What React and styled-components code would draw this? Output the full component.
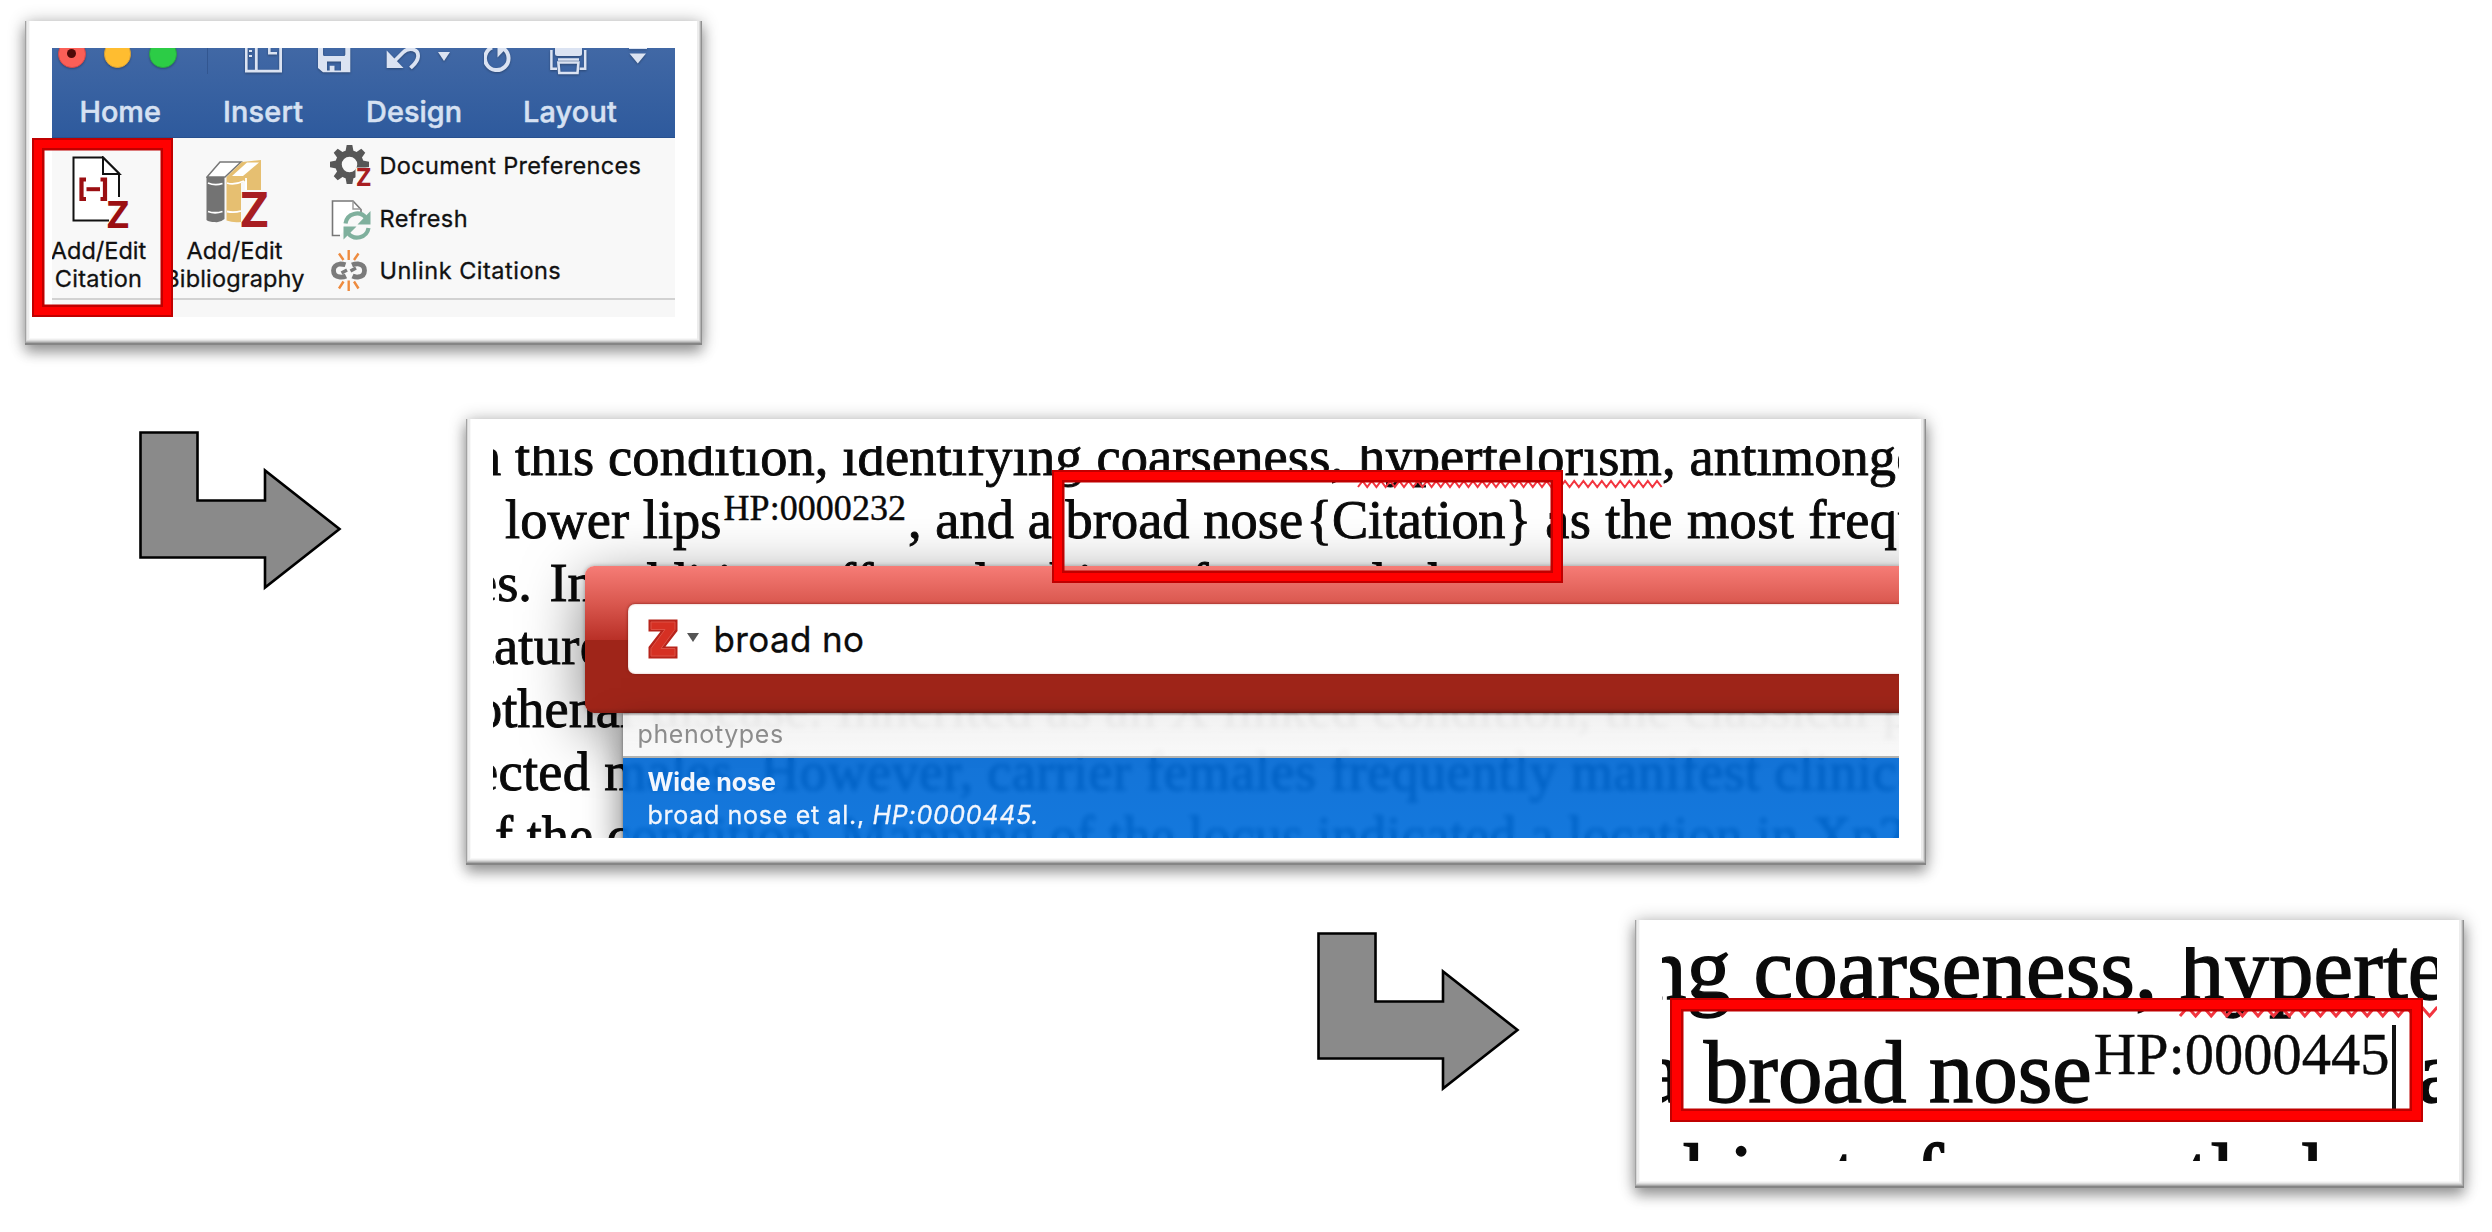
import React from 'react';
import styled, { createGlobalStyle } from 'styled-components';

const SANS = "Inter, 'Liberation Sans', sans-serif";
const SERIF = "'Liberation Serif', 'Times New Roman', serif";

const Global = createGlobalStyle`
  * { box-sizing: border-box; }
  html, body { margin: 0; padding: 0; background: #fff; }
  body { width: 2492px; height: 1232px; overflow: hidden; }
`;

/* ---------- figure layout ---------- */

const Figure = styled.main`
  width: 2492px;
  height: 1232px;
  background: #fff;
  display: flex;
  flex-direction: column;
  align-items: flex-start;
  overflow: hidden;
`;

const Step = styled.section`
  display: flex;
  align-items: flex-start;
  gap: ${(p) => p.$gap || 0}px;
  padding: ${(p) => p.$top}px 0 0 ${(p) => p.$left}px;
`;

const Card = styled.div`
  position: relative;
  flex: none;
  width: ${(p) => p.$w}px;
  height: ${(p) => p.$h}px;
  padding: 27px;
  background: #fff;
  box-shadow:
    inset 0 -2px 0 #858585,
    inset 1px 0 0 #a2a2a2,
    inset -1px 0 0 #909090,
    inset 0 -3px 0 #a6a6a6,
    inset -2px 0 0 #b2b2b2,
    inset 0 -4px 0 #c4c4c4,
    inset 2px 0 0 #d8d8d8,
    inset -3px 0 0 #d6d6d6,
    inset 0 -5px 0 #dcdcdc,
    inset 4px 0 0 #ececec,
    inset -5px 0 0 #ececec,
    inset 0 -6px 0 #eeeeee,
    inset 5px -7px 0 #f8f8f8,
    0 8px 12px rgba(0, 0, 0, 0.28),
    0 1px 16px rgba(0, 0, 0, 0.3);
`;

const Shot = styled.div`
  position: relative;
  width: 100%;
  height: ${(p) => p.$h}px;
  overflow: hidden;
  background: ${(p) => p.$bg || '#fff'};
`;

const Highlight = styled.div`
  position: absolute;
  z-index: 3;
  left: ${(p) => p.$x}px;
  top: ${(p) => p.$y}px;
  width: ${(p) => p.$w}px;
  height: ${(p) => p.$h}px;
  border: 2.5px solid #c00000;
  box-shadow: inset 0 0 0 ${(p) => p.$t || 8}px #ff0000, inset 0 0 0 ${(p) => (p.$t || 8) + 2.5}px #c00000;
`;

const ArrowSvg = styled.svg`
  display: block;
  flex: none;
  margin-top: ${(p) => p.$top}px;
`;

const Arrow = ({ top }) => (
  <ArrowSvg $top={top} width="205" height="162" viewBox="138 430 205 162">
    <path
      d="M140.5 432.5H197.5V500.5H265V470.5L339.5 529L265 587.5V557.5H140.5Z"
      fill="#8a8a8a"
      stroke="#000"
      strokeWidth="2.6"
    />
  </ArrowSvg>
);

/* ---------- Word ribbon ---------- */

const TitleArea = styled.div`
  height: 90px;
  background: linear-gradient(#4168a5, #2e5a9d);
  border-bottom: 1px solid #27508f;
`;

const QuickBar = styled.div`
  display: flex;
  align-items: flex-start;
  height: 34px;
  padding-left: 6px;
`;

const Lights = styled.div`
  display: flex;
  gap: 18px;
  margin-top: -8px;
`;

const Light = styled.span`
  width: 27.5px;
  height: 27.5px;
  border-radius: 50%;
  background: ${(p) => p.$c};
  border: 1px solid ${(p) => p.$edge};
  display: flex;
  align-items: center;
  justify-content: center;
  box-shadow: 0 1px 2px rgba(0, 0, 0, 0.25);
  &::after {
    content: '';
    width: 9px;
    height: 9px;
    border-radius: 50%;
    background: ${(p) => p.$dot || 'transparent'};
  }
`;

const Divider = styled.span`
  width: 1px;
  height: 26px;
  margin-left: 30px;
  background: #325690;
`;

const BarIcon = styled.svg`
  display: block;
  flex: none;
  height: 30px;
  margin-left: ${(p) => p.$gap}px;
  filter: drop-shadow(0 1px 1px rgba(0, 0, 0, 0.3));
`;

const Tabs = styled.nav`
  display: flex;
  padding-left: 27.5px;
`;

const Tab = styled.span`
  width: ${(p) => p.$w}px;
  font: 500 28.8px/44px ${SANS};
  letter-spacing: ${(p) => p.$ls || 0}px;
  color: #d6e1f2;
  -webkit-text-stroke: 0.5px #d6e1f2;
  margin-top: 8px;
`;

const RibbonBody = styled.div`
  display: flex;
  height: 162px;
  border-bottom: 2px solid #d2d2d2;
  background: #f8f8f8;
`;

const BigButton = styled.div`
  display: flex;
  flex-direction: column;
  align-items: center;
  flex: none;
  width: ${(p) => p.$w}px;
  margin-left: ${(p) => p.$ml}px;
  padding-top: 18px;
`;

const BigLabel = styled.span`
  font: 400 23.5px/28px ${SANS};
  letter-spacing: ${(p) => p.$ls || 0}px;
  color: #111;
  -webkit-text-stroke: 0.3px #111;
  white-space: nowrap;
`;

const BigIcon = styled.svg`
  display: block;
  margin: 0 0 7px ${(p) => p.$shift}px;
`;

const Commands = styled.div`
  display: flex;
  flex-direction: column;
  margin-left: 24.5px;
  padding-top: 2px;
`;

const Command = styled.div`
  display: flex;
  align-items: center;
  height: 52.5px;
  gap: 7.5px;
  font: 400 23.5px/30px ${SANS};
  letter-spacing: ${(p) => p.$ls || 0}px;
  color: #111;
  -webkit-text-stroke: 0.3px #111;
  white-space: nowrap;
`;

const SmallIcon = styled.svg`
  display: block;
  flex: none;
`;

const ZMark = ({ x, y, size, fill = '#a81e22' }) => (
  <text x={x} y={y} fontSize={size} fontWeight="700" fontFamily="'Open Sans', 'Noto Sans', sans-serif" fill={fill}>Z</text>
);

const INK = '#dbe3f2';

const Ribbon = () => (
  <Shot $h={269} $bg="#f7f7f7">
    <TitleArea>
      <QuickBar>
        <Lights>
          <Light $c="#fb5f57" $edge="#d9494a" $dot="#4d0a08" />
          <Light $c="#ffbd30" $edge="#d9a23a" />
          <Light $c="#2ccc46" $edge="#2aa545" />
        </Lights>
        <Divider />
        <BarIcon $gap={37} width="38" viewBox="0 0 38 30">
          <path d="M1.2 -2V23.2H35.6V-2M11.3 0V23" fill="none" stroke={INK} strokeWidth="2.8" />
          <path d="M24.3 -1V5.2H32" fill="none" stroke={INK} strokeWidth="2.6" />
          <path d="M4 2h3v2h-3zM4 7h3v2h-3z" fill={INK} />
        </BarIcon>
        <BarIcon $gap={35} width="33" viewBox="0 0 33 30">
          <path fillRule="evenodd" fill={INK} d="M0 0H32.3V24.3H5L0 20ZM5 -1V6.500Q5 8 6.500 8H25.800Q27.300 8 27.300 6.500V-1ZM9 13.500V22.500H11.700V17.700H16.500V22.500H23V13.500Z" />
        </BarIcon>
        <BarIcon $gap={35} width="35" viewBox="0 0 35 30">
          <path d="M0.7 2.500V20H17.500Z" fill={INK} />
          <path d="M9 12.500L17 4.500C23 -1.500 33 1 32 9C31.500 14 28.500 16 24.500 20" fill="none" stroke={INK} strokeWidth="3.8" />
        </BarIcon>
        <BarIcon $gap={17.5} width="12" viewBox="0 0 12 30">
          <path d="M0 4H12L6 13Z" fill={INK} />
        </BarIcon>
        <BarIcon $gap={34} width="28" viewBox="0 0 28 30">
          <path d="M8 -0.5A11.800 11.800 0 1 0 20 1" fill="none" stroke={INK} strokeWidth="4" />
          <path d="M13.500 -2V9.500L23.500 -1Z" fill={INK} />
        </BarIcon>
        <BarIcon $gap={37.5} width="37" viewBox="0 0 37 30">
          <path d="M5 0H32V5.500Q32 8 29.500 8H7.500Q5 8 5 5.500Z" fill={INK} />
          <path d="M7 20.700H1.400V2M29.600 20.700H35.200V2M8 11.500H29" fill="none" stroke={INK} strokeWidth="2.5" />
          <path d="M8.400 14.500H28.400L27.500 25H9.300Z" fill="none" stroke={INK} strokeWidth="2.6" />
        </BarIcon>
        <BarIcon $gap={42.5} width="18" viewBox="0 0 18 30">
          <path d="M0 -1H18V1H0ZM0.500 5.500H17L8.800 15.500Z" fill={INK} />
        </BarIcon>
      </QuickBar>
      <Tabs>
        <Tab $w={143.5}>Home</Tab>
        <Tab $w={143} $ls={0.2}>Insert</Tab>
        <Tab $w={157} $ls={0.1}>Design</Tab>
        <Tab $w={100} $ls={0.2}>Layout</Tab>
      </Tabs>
    </TitleArea>
    <RibbonBody>
      <BigButton $w={96} $ml={-1.5}>
        <BigIcon $shift={6} width="60" height="74" viewBox="0 0 60 74">
          <path d="M47 41V17.500L31 1.500H1.500V64.500H37" fill="#fff" stroke="#111" strokeWidth="2" />
          <path d="M31 1.500V18H47.500Z" fill="#fff" stroke="#111" strokeWidth="2" />
          <path d="M14 23.500H9.500V43H14M28.500 23.500H33V43H28.500" fill="none" stroke="#9b0f12" strokeWidth="4.2" />
          <path d="M14.500 33.200H28" stroke="#9b0f12" strokeWidth="4" />
          <ZMark x={35} y={71.500} size={38} fill="#9b0f12" />
        </BigIcon>
        <BigLabel>Add/Edit</BigLabel>
        <BigLabel $ls={0.3}>Citation</BigLabel>
      </BigButton>
      <BigButton $w={142} $ml={17}>
        <BigIcon $shift={6} width="64" height="74" viewBox="0 0 64 74">
          <path d="M1 21L14 6H35L19 21Z" fill="#fff" stroke="#777" strokeWidth="1.5" />
          <path d="M0.500 21H18.500V63Q14 67 9 66Q3 66 0.500 64Z" fill="#737373" />
          <path d="M2 27Q9 30 16.500 27.500M2 55.500Q9 58 16.500 55.500" fill="none" stroke="#fff" strokeWidth="1.8" />
          <path d="M20.500 21L36 6L55 4V34H41V24L35 27V66Q27 67 20.500 64.500Z" fill="#e6bf71" />
          <path d="M26 20L41 6.500H53L37 20Z" fill="#fff" />
          <path d="M21 27Q28 29.500 38 25M21 55.500Q28 57 35 55M40 22V34" fill="none" stroke="#fff" strokeWidth="1.8" />
          <ZMark x={34.500} y={71} size={48} />
        </BigIcon>
        <BigLabel $ls={0.1}>Add/Edit</BigLabel>
        <BigLabel $ls={0.15}>Bibliography</BigLabel>
      </BigButton>
      <Commands>
        <Command $ls={0.32}>
          <SmallIcon width="42" height="42" viewBox="0 0 42 42">
            <g transform="translate(19.500 19.500)" fill="#575757">
              <circle r="11" fill="none" stroke="#575757" strokeWidth="6.500" />
              {[0, 45, 90, 135, 180, 225, 270, 315].map((a) => (
                <path key={a} transform={`rotate(${a})`} d="M-4.200 -12L-2.800 -19.500H2.800L4.200 -12Z" />
              ))}
            </g>
            <path d="M25.500 22.500H42V42H25.500Z" fill="#f8f8f8" />
            <ZMark x={26.500} y={41} size={25} />
          </SmallIcon>
          Document Preferences
        </Command>
        <Command $ls={0.4}>
          <SmallIcon width="42" height="42" viewBox="0 0 42 42">
            <path d="M10 37.500H2.500V3H23L31 11.500V14" fill="#fff" stroke="#777" strokeWidth="1.600" />
            <path d="M23 3V11H30.500" fill="none" stroke="#999" strokeWidth="1.400" />
            <circle cx="27" cy="27" r="13" fill="#f8f8f8" />
            <path d="M15.500 25.500A11.500 11.500 0 0 1 36 20M38.500 30A11.500 11.500 0 0 1 18 35" fill="none" stroke="#7fb09d" strokeWidth="4.200" />
            <path d="M40.500 13V26.500H27.500ZM13.500 41.500V28.500H26.500Z" fill="#7fb09d" />
          </SmallIcon>
          Refresh
        </Command>
        <Command $ls={0.5}>
          <SmallIcon width="42" height="42" viewBox="0 0 42 42">
            <path d="M15.500 14.800Q13 14 10 14Q3.500 15 3.500 20.500Q3.500 26.500 10 27Q13.500 27.300 16 26M22 15Q25 13.700 28 13.800Q34.500 14.500 34.500 20.500Q34.500 26.500 28 27Q25 27.200 22.500 26" fill="none" stroke="#7b7b7b" strokeWidth="4.800" />
            <path d="M11.500 23L17 20M20.500 21L26 18" stroke="#7b7b7b" strokeWidth="3.400" />
            <path d="M18.700 0V10M18.700 30.500V41M9 3.500L13.500 10M28.500 3.500L24 10M9 38.500L13.500 31.500M28.500 38.500L24 31.500" stroke="#ee8b3f" strokeWidth="2.400" />
          </SmallIcon>
          Unlink Citations
        </Command>
      </Commands>
    </RibbonBody>
  </Shot>
);

/* ---------- manuscript text ---------- */

const Manuscript = styled.div`
  font-family: ${SERIF};
  font-size: ${(p) => p.$size}px;
  line-height: ${(p) => p.$lh}px;
  color: #0a0a0a;
  -webkit-text-stroke: ${(p) => p.$stroke || 0.9}px #0a0a0a;
  margin-top: ${(p) => p.$top}px;
`;

const Line = styled.div`
  height: ${(p) => p.$lh}px;
  padding-left: ${(p) => (p.$x > 0 ? p.$x : 0)}px;
  margin-left: ${(p) => (p.$x < 0 ? p.$x : 0)}px;
  letter-spacing: ${(p) => p.$ls || 0}px;
  white-space: pre;
`;

const Run = styled.span`
  margin-left: ${(p) => p.$ml || 0}px;
  letter-spacing: ${(p) => p.$ls || 0}px;
`;

const Super = styled.span`
  display: inline-block;
  font-size: ${(p) => p.$size}px;
  line-height: 0;
  vertical-align: ${(p) => p.$up}px;
  margin: 0 ${(p) => p.$gap || 2}px;
  -webkit-text-stroke-width: 0.4px;
`;

const Flagged = styled.span`
  position: relative;
  display: inline-block;
  line-height: inherit;
`;

const Wave = styled.svg`
  position: absolute;
  left: 0;
  top: ${(p) => p.$top}px;
  overflow: visible;
`;

const Squiggle = ({ top, width, step, amp, weight = 2 }) => {
  const count = Math.floor(width / step);
  const points = Array.from({ length: count + 1 }, (_, i) => `${i * step},${i % 2 ? 0 : amp}`).join(' ');
  return (
    <Wave $top={top} width={width} height={amp}>
      <polyline points={points} fill="none" stroke="#f2353f" strokeWidth={weight} />
    </Wave>
  );
};

const Caret = styled.span`
  display: inline-block;
  width: 4px;
  height: 92px;
  margin: 0 0 -15px 0;
  vertical-align: baseline;
  background: #111;
`;

/* ---------- citation popup ---------- */

const Popup = styled.div`
  position: absolute;
  left: 91.500px;
  top: 120.500px;
  width: 1360px;
`;

const SearchBar = styled.div`
  height: 147px;
  padding: 38px 0 39px 43px;
  border-radius: 9px;
  background: linear-gradient(#f67c76 0, #d9574e 38px, #b93027 74px, #9f2519 74px, #9f2519 142px, #8b2118 147px);
  box-shadow: 0 16px 60px rgba(0, 0, 0, 0.5), 0 0 4px rgba(0, 0, 0, 0.3);
`;

const SearchField = styled.div`
  display: flex;
  align-items: center;
  height: 70px;
  padding-left: 20px;
  border-radius: 7px;
  background: #fff;
  box-shadow: 0 0 3px #7d1c15, inset 0 0 2px rgba(190, 110, 100, 0.6);
`;

const DropCaret = styled.span`
  margin: -4px 0 0 8.5px;
  border: 6px solid transparent;
  border-top: 9px solid #555;
  border-bottom: 0;
`;

const Query = styled.span`
  margin: -1px 0 0 14.5px;
  font: 400 35px/50px ${SANS};
  letter-spacing: 0.35px;
  color: #0c0c0c;
  -webkit-text-stroke: 0.3px #0c0c0c;
`;

const Results = styled.div`
  position: relative;
  margin-left: 38px;
  box-shadow: -8px 10px 34px -6px rgba(0, 0, 0, 0.5), 0 0 3px rgba(0, 0, 0, 0.4);
`;

const GroupName = styled.div`
  height: 45px;
  padding-left: 15px;
  border-bottom: 2px solid #b3b3b0;
  background: linear-gradient(rgba(150, 145, 145, 0.9) 0, rgba(246, 246, 246, 0.94) 3px, rgba(249, 249, 249, 0.97) 45px);
  backdrop-filter: blur(2.5px);
  font: 400 25px/42px ${SANS};
  letter-spacing: 0.6px;
  color: #8c8c8c;
`;

const Result = styled.div`
  display: flex;
  flex-direction: column;
  height: 100px;
  padding: 8px 0 0 25px;
  background: linear-gradient(rgba(0, 104, 212, 0.92), rgba(0, 110, 220, 0.92));
  backdrop-filter: blur(2.5px);
  font: 400 25px/33px ${SANS};
  color: #f2f6fd;
`;

const ResultTitle = styled.span`
  font-weight: 700;
  letter-spacing: -0.1px;
`;

const ResultMeta = styled.span`
  letter-spacing: 0.7px;
  -webkit-text-stroke: 0.3px #f2f6fd;
`;

const ZLogo = () => (
  <svg width="31" height="40" viewBox="0 0 31 40">
    <path d="M0.500 0.500H29.500V12L17.500 27.500H29.500V39.500H0.500V28L12.500 12.500H0.500Z" fill="#b8241b" />
    <path d="M3 3H27V10.500L13 29.500H27V37H3V29.500L17 10.500H3Z" fill="#d63023" stroke="#dd5145" strokeWidth="1" />
  </svg>
);

const CitationSearch = () => (
  <Shot $h={392.5}>
    <Manuscript $size={54.4} $lh={63.2} $top={-20}>
      <Line $lh={63.2} $x={-19} $ls={0.15}>
        n this condition, identifying coarseness,{' '}
        <Flagged>
          hypertelorism
          <Squiggle top={55} width={306} step={4.6} amp={6} />
        </Flagged>
        , antimongoloid
      </Line>
      <Line $lh={63.2} $x={12} $ls={0.05}>
        lower lips<Super $size={36} $up={18}>HP:0000232</Super>, and a broad nose<Run $ml={3} $ls={-0.25}>{'{'}Citation{'}'}</Run><Run $ls={0.4}> as the most frequent</Run>
      </Line>
      <Line $lh={63.2} $x={-20}>es.<Run $ml={4}> In addition, affected subjects frequently have</Run></Line>
      <Line $lh={63.2} $x={-36} $ls={0.3}>stature</Line>
      <Line $lh={63.2} $x={-18}>othenar disease. Inherited as an X linked condition, the classical phenotype</Line>
      <Line $lh={63.2} $x={-19} $ls={0.3}>ected males. However, carrier females frequently manifest clinical</Line>
      <Line $lh={63.2} $x={2}>f the condition. Mapping of the locus indicated a location in Xp22</Line>
    </Manuscript>
    <Popup>
      <SearchBar>
        <SearchField>
          <ZLogo />
          <DropCaret />
          <Query>broad no</Query>
        </SearchField>
      </SearchBar>
      <Results>
        <GroupName>phenotypes</GroupName>
        <Result>
          <ResultTitle>Wide nose</ResultTitle>
          <ResultMeta>broad nose et al., <em>HP:0000445.</em></ResultMeta>
        </Result>
      </Results>
    </Popup>
  </Shot>
);

const CitationResult = () => (
  <Shot $h={214}>
    <Manuscript $size={89} $lh={103.3} $top={-29.500} $stroke={1.4}>
      <Line $lh={103.3} $x={-20} $ls={0.1}>
        ng coarseness,{' '}
        <Flagged>
          hyperte
          <Squiggle top={89} width={260} step={7.8} amp={9} weight={3} />
        </Flagged>
      </Line>
      <Line $lh={103.3} $x={-20}>
        a broad nose<Super $size={58.5} $up={28} $gap={2}>HP:0000445</Super>
        <Caret /> as
      </Line>
      <Line $lh={103.3} $x={-57}>subjects frequently have</Line>
    </Manuscript>
  </Shot>
);

export default function App() {
  return (
    <>
      <Global />
      <Figure>
        <Step $top={21} $left={25}>
          <Card $w={676.5} $h={324}>
            <Ribbon />
            <Highlight $x={7} $y={117} $w={141} $h={179} />
          </Card>
        </Step>
        <Step $top={73.500} $left={138} $gap={123}>
          <Arrow top={11.500} />
          <Card $w={1460} $h={446.5}>
            <CitationSearch />
            <Highlight $x={586} $y={51} $w={511} $h={113.5} />
          </Card>
        </Step>
        <Step $top={55} $left={1316} $gap={114}>
          <Arrow top={11} />
          <Card $w={829} $h={268}>
            <CitationResult />
            <Highlight $x={35} $y={78} $w={753} $h={124} $t={9} />
          </Card>
        </Step>
      </Figure>
    </>
  );
}
